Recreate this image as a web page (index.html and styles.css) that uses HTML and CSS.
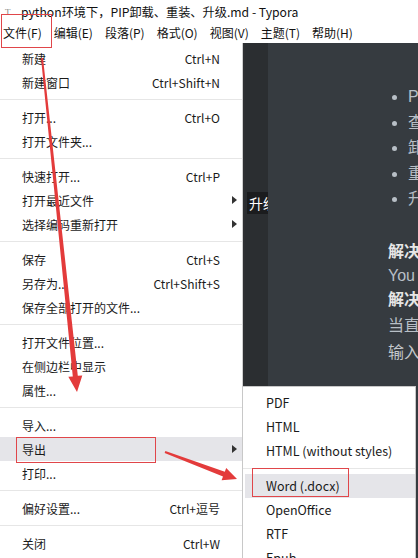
FILE: index.html
```html
<!DOCTYPE html>
<html lang="zh-CN">
<head>
<meta charset="utf-8">
<title>Typora</title>
<link rel="stylesheet" href="styles.css">
</head>
<body>
<div class="window">
  <div class="titlebar">
    <span class="app-icon">T</span>
    <span class="title">python环境下，PIP卸载、重装、升级.md - Typora</span>
  </div>
  <div class="menubar">
    <span class="mb-item">文件(F)</span>
    <span class="mb-item">编辑(E)</span>
    <span class="mb-item">段落(P)</span>
    <span class="mb-item">格式(O)</span>
    <span class="mb-item">视图(V)</span>
    <span class="mb-item">主题(T)</span>
    <span class="mb-item">帮助(H)</span>
  </div>
  <div class="workspace">
    <div class="sidebar"></div>
    <div class="strip"><span class="outline-tip">升级</span></div>
    <div class="editor">
      <ul class="list">
        <li>PIP</li>
        <li>查看</li>
        <li>卸载</li>
        <li>重装</li>
        <li>升级</li>
      </ul>
      <div class="line bold">解决方法</div>
      <div class="line">You are using</div>
      <div class="line bold">解决方法</div>
      <div class="line l4">当直接使用</div>
      <div class="line l5">输入命令</div>
    </div>
  </div>

  <div class="menu">
    <div class="mi"><span class="label">新建</span><span class="key">Ctrl+N</span><span class="sub"></span></div>
    <div class="mi"><span class="label">新建窗口</span><span class="key">Ctrl+Shift+N</span><span class="sub"></span></div>
    <div class="sep"></div>
    <div class="mi"><span class="label">打开...</span><span class="key">Ctrl+O</span><span class="sub"></span></div>
    <div class="mi"><span class="label">打开文件夹...</span><span class="key"></span><span class="sub"></span></div>
    <div class="sep"></div>
    <div class="mi"><span class="label">快速打开...</span><span class="key">Ctrl+P</span><span class="sub"></span></div>
    <div class="mi"><span class="label">打开最近文件</span><span class="key"></span><span class="sub"><span class="tri"></span></span></div>
    <div class="mi"><span class="label">选择编码重新打开</span><span class="key"></span><span class="sub"><span class="tri"></span></span></div>
    <div class="sep"></div>
    <div class="mi"><span class="label">保存</span><span class="key">Ctrl+S</span><span class="sub"></span></div>
    <div class="mi"><span class="label">另存为...</span><span class="key">Ctrl+Shift+S</span><span class="sub"></span></div>
    <div class="mi"><span class="label">保存全部打开的文件...</span><span class="key"></span><span class="sub"></span></div>
    <div class="sep"></div>
    <div class="mi"><span class="label">打开文件位置...</span><span class="key"></span><span class="sub"></span></div>
    <div class="mi"><span class="label">在侧边栏中显示</span><span class="key"></span><span class="sub"></span></div>
    <div class="mi"><span class="label">属性...</span><span class="key"></span><span class="sub"></span></div>
    <div class="sep"></div>
    <div class="mi"><span class="label">导入...</span><span class="key"></span><span class="sub"></span></div>
    <div class="mi active"><span class="label">导出</span><span class="key"></span><span class="sub"><span class="tri"></span></span></div>
    <div class="mi"><span class="label">打印...</span><span class="key"></span><span class="sub"></span></div>
    <div class="sep"></div>
    <div class="mi"><span class="label">偏好设置...</span><span class="key">Ctrl+逗号</span><span class="sub"></span></div>
    <div class="sep"></div>
    <div class="mi"><span class="label">关闭</span><span class="key">Ctrl+W</span><span class="sub"></span></div>
  </div>

  <div class="submenu">
    <div class="si">PDF</div>
    <div class="si">HTML</div>
    <div class="si">HTML (without styles)</div>
    <div class="sep"></div>
    <div class="si active">Word (.docx)</div>
    <div class="si">OpenOffice</div>
    <div class="si">RTF</div>
    <div class="si">Epub</div>
  </div>

  <div class="mark mark-file"></div>
  <div class="mark mark-export"></div>
  <div class="mark mark-word"></div>

  <svg class="arrows" width="418" height="558" viewBox="0 0 418 558">
    <polygon points="41,58.1 43,57.9 77.8,375.8 82.3,375.4 77,392 68.3,376.8 72.8,376.4"/>
    <polygon points="165.35,451.06 224.8,471.8 226.2,468 237,479 221.6,480.2 223,476.4 164.65,452.94"/>
  </svg>
</div>
</body>
</html>
```

FILE: styles.css
```css
* { box-sizing: border-box; }
html, body { margin: 0; padding: 0; }
body {
  width: 418px;
  height: 558px;
  overflow: hidden;
  background: #fff;
  font-family: "Noto Sans CJK SC", "Microsoft YaHei", sans-serif;
  color: #1a1a1a;
}
.window {
  position: relative;
  width: 418px;
  height: 558px;
  display: flex;
  flex-direction: column;
  overflow: hidden;
}
.titlebar {
  height: 22px;
  display: flex;
  align-items: center;
  padding-left: 5px;
  padding-top: 1px;
  gap: 7px;
  background: #fff;
}
.app-icon {
  font-family: "Liberation Serif", serif;
  font-size: 9px;
  color: #888;
  width: 9px;
}
.title {
  font-size: 12.2px;
  color: #111;
  white-space: nowrap;
}
.menubar {
  height: 21px;
  display: flex;
  align-items: center;
  padding-left: 3px;
  gap: 12px;
  background: #fff;
}
.mb-item {
  font-size: 12px;
  color: #111;
  white-space: nowrap;
}
.workspace {
  flex: 1;
  display: flex;
  background: #363b40;
}
.sidebar {
  width: 245px;
  background: #2e3033;
}
.strip {
  width: 23px;
  background: #2b2e31;
  position: relative;
  overflow: hidden;
}
.outline-tip {
  position: absolute;
  left: 2px;
  top: 149px;
  width: 30px;
  height: 22px;
  line-height: 22px;
  padding-left: 2px;
  background: #1b1c1e;
  color: #fff;
  font-size: 14px;
  white-space: nowrap;
}
.editor {
  flex: 1;
  padding: 41px 0 0 120px;
  overflow: hidden;
  font-family: "Liberation Sans", "Noto Sans CJK SC", sans-serif;
  font-size: 16px;
  color: #b8bfc6;
  white-space: nowrap;
}
.list {
  margin: 0;
  padding-left: 20px;
  line-height: 25.6px;
  list-style: disc;
}
.list li::marker { color: #b8bfc6; }
.line {
  height: 24px;
  line-height: 24px;
}
.list + .line { margin-top: 28px; }
.bold { font-weight: bold; color: #e6e6e6; }
.l4 { margin-top: 2px; }
.l5 { margin-top: 3px; color: #c4c8cc; }

.menu {
  position: absolute;
  left: 0;
  top: 43px;
  width: 243px;
  height: 520px;
  background: #fff;
  border-right: 1px solid #cfcfcf;
  padding-top: 3px;
}
.mi {
  height: 24px;
  display: flex;
  align-items: center;
  padding-left: 22px;
  font-size: 12px;
  color: #1a1a1a;
  white-space: nowrap;
}
.mi .label { flex: 1; }
.mi .key { text-align: right; }
.mi .sub {
  width: 22px;
  height: 24px;
  display: flex;
  align-items: center;
  padding-left: 12px;
}
.tri {
  width: 0;
  height: 0;
  border-top: 4px solid transparent;
  border-bottom: 4px solid transparent;
  border-left: 5px solid #333;
}
.mi.active { background: #e5e5e9; }
.sep {
  height: 11px;
  display: flex;
  align-items: center;
}
.sep::after {
  content: "";
  flex: 1;
  height: 1px;
  background: #e6e6e6;
}

.submenu {
  position: absolute;
  left: 242px;
  top: 386px;
  width: 174px;
  height: 190px;
  background: #fff;
  border: 1px solid #c8c8c8;
  padding-top: 4px;
}
.si {
  height: 24px;
  line-height: 24px;
  padding-left: 23px;
  font-size: 12.5px;
  color: #1a1a1a;
  white-space: nowrap;
}
.si.active { background: #e5e5e9; margin-left: 2px; padding-left: 21px; }

.mark {
  position: absolute;
  border: 1px solid #e0464a;
}
.mark-file { left: 1px; top: 14px; width: 51px; height: 34px; }
.mark-export { left: 16px; top: 437px; width: 140px; height: 26px; }
.mark-word { left: 252px; top: 468px; width: 97px; height: 29px; }

.arrows {
  position: absolute;
  left: 0;
  top: 0;
  pointer-events: none;
}
.arrows polygon { fill: #e33b3b; }
```
